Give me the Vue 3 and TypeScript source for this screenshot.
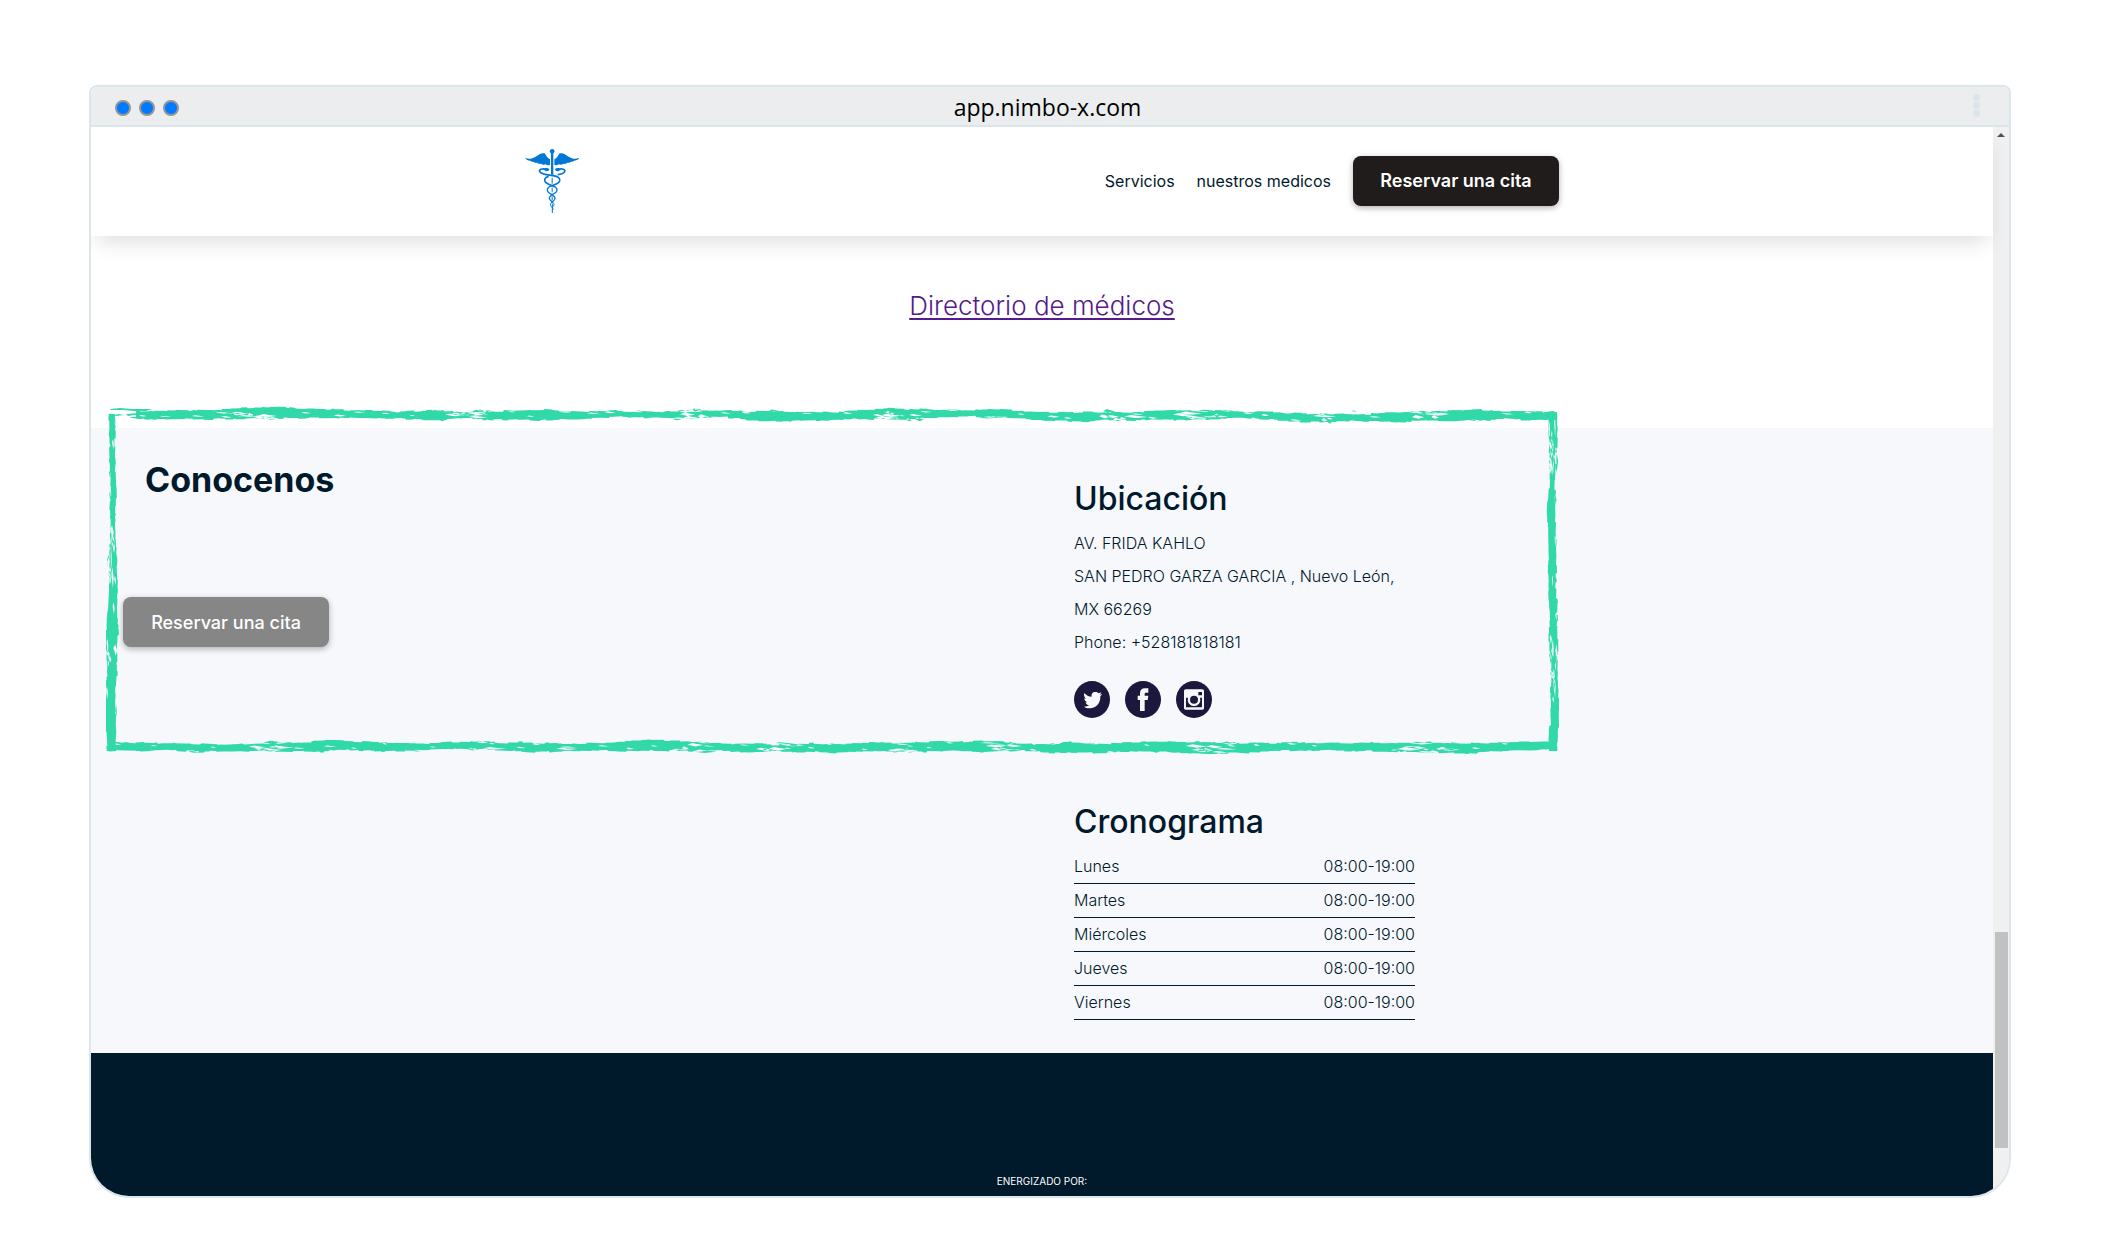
<script setup lang="ts">
interface DaySchedule {
  day: string
  hours: string
}

const schedule: DaySchedule[] = [
  { day: 'Lunes', hours: '08:00-19:00' },
  { day: 'Martes', hours: '08:00-19:00' },
  { day: 'Miércoles', hours: '08:00-19:00' },
  { day: 'Jueves', hours: '08:00-19:00' },
  { day: 'Viernes', hours: '08:00-19:00' },
]

// Small seeded generator, so that the brush frame is the same on every load.
function seeded(seed: number): () => number {
  let s = seed
  return () => {
    s = (s * 1664525 + 1013904223) % 4294967296
    return s / 4294967296
  }
}

type Profile = (t: number) => number

interface Stroke {
  from: number
  to: number
  center: Profile
  half: Profile
  seed: number
  vertical: boolean
}

// Dry-brush stroke along one axis: a ragged ribbon with long thin scratches cut out of it.
function brush({ from, to, center, half, seed, vertical }: Stroke): string {
  const rnd = seeded(seed)
  const point = (a: number, b: number) =>
    vertical ? `${b.toFixed(1)} ${a.toFixed(1)}` : `${a.toFixed(1)} ${b.toFixed(1)}`

  const edge = (sign: number): string[] => {
    const out: string[] = []
    let pos = from
    let wander = 0
    while (pos < to) {
      const t = pos / to
      wander = wander * 0.8 + (rnd() - 0.5) * 2
      const swell = Math.sin(pos / 47 + seed + sign) * 0.9
      const offset = center(t) + sign * (half(t) + swell) + wander
      const run = 2 + rnd() * 8
      out.push(point(pos, offset), point(Math.min(to, pos + run), offset + (rnd() - 0.5)))
      pos += run + rnd() * 2
    }
    return out
  }

  const ribbon = [...edge(-1), ...edge(1).reverse()]
  let d = `M${ribbon.join('L')}Z`

  let pos = from + 3
  while (pos < to - 24) {
    const t = pos / to
    const dense = Math.sin(pos / 37 + seed) + Math.sin(pos / 17) > 0.5
    const len = 5 + rnd() * (dense ? 20 : 8)
    const thick = 0.5 + rnd() * (dense ? 1.5 : 0.5)
    const y = center(t) + (rnd() - 0.5) * 2.2 * half(t)
    d += `M${[
      point(pos, y),
      point(pos + len * 0.3, y - thick),
      point(pos + len * 0.6, y - thick * 0.4),
      point(pos + len, y + 0.4),
      point(pos + len * 0.5, y + thick),
    ].join('L')}Z`
    pos += dense ? 2 + rnd() * 5 : 16 + rnd() * 26
  }
  return d
}

const strokes: string[] = [
  brush({
    from: 30,
    to: 1450,
    center: (t) => 8 + 2 * t + Math.sin(t * 40) * 0.6,
    half: (t) => 3.8 + Math.min(t, 0.3) * 2,
    seed: 11,
    vertical: false,
  }),
  brush({ from: 3, to: 1450, center: () => 341, half: () => 4.6, seed: 29, vertical: false }),
  brush({ from: 8, to: 345, center: (t) => 6.5 - t, half: (t) => 2.4 + t * 2.4, seed: 47, vertical: true }),
  brush({ from: 6, to: 345, center: (t) => 1447 + Math.sin(t * 9) * 0.6, half: () => 4, seed: 83, vertical: true }),
  // Loose bristle marks where the top stroke starts
  'M4 3L14 2L26 3L46 3L40 5L28 5L17 4L5 4ZM8 9L13 8L18 9L10 10ZM20 8L34 7L40 9L28 9L22 10ZM24 11L40 11L36 13L26 12Z',
]
</script>

<template>
  <div class="stage">
    <div class="window">
      <div class="titlebar">
        <div class="lights"><span></span><span></span><span></span></div>
        <div class="address">app.nimbo-x.com</div>
        <div class="kebab"><span></span><span></span><span></span></div>
      </div>

      <div class="viewport">
        <div class="page">
          <header class="site-header">
            <div class="header-inner">
              <svg class="logo" viewBox="48 42 162 192" role="img" aria-label="Caduceo">
                <g fill="#0078d4">
                  <circle cx="129.500" cy="49" r="7" />
                  <path d="M126 54H133V119H126Z" />
                  <path id="wing" d="M48 69C60 73 70 71 80 65C90 59 96 53 107 55C112 61 115 70 123 73V89C117 92 112 90 109 88C104 91 99 88 96 86C91 88 87 85 84 83C79 84 76 82 73 80C69 81 66 79 64 77C57 77 51 74 48 69Z" />
                  <use href="#wing" transform="translate(259 0) scale(-1 1)" />
                  <path id="head" d="M121 103C120 109 113 110 109 107L104 104C109 98 117 98 121 103Z" />
                  <use href="#head" transform="translate(259 0) scale(-1 1)" />
                </g>
                <g fill="none" stroke="#0078d4">
                  <path d="M113 103C99 99 89 104 92 110C96 118 114 120 132 122C148 124 154 130 152 138C149 148 132 150 124 154" stroke-width="5" />
                  <path d="M146 103C160 99 170 104 167 110C164 116 156 118 146 119M119 124C107 127 106 134 108 139C112 147 128 151 136 155" stroke-width="5" />
                  <path d="M126 153C111 159 113 169 121 174C130 180 138 183 138 190C138 196 132 199 127 203M133 153C148 159 146 169 138 174C129 180 121 183 121 190C121 196 128 199 132 203" stroke-width="4" />
                  <path d="M128 202C122 207 124 213 129 217C133 220 132 223 130 226M131 202C137 207 135 213 130 217M129.500 128V146M129.500 158V172M129.500 184V196M130 206V234" stroke-width="3" />
                </g>
              </svg>
              <nav class="nav">
                <a href="#servicios">Servicios</a>
                <a href="#medicos">nuestros medicos</a>
                <button type="button" class="cta">Reservar una cita</button>
              </nav>
            </div>
          </header>

          <section id="medicos" class="directory">
            <a href="#directorio">Directorio de médicos</a>
          </section>

          <section class="about">
            <svg class="brush-frame" viewBox="0 0 1453 348" preserveAspectRatio="none" aria-hidden="true">
              <path v-for="(d, i) in strokes" :key="i" :d="d" fill="#31d9a9" fill-rule="evenodd" />
            </svg>

            <div class="intro">
              <h1>Conocenos</h1>
              <button type="button" class="cta muted">Reservar una cita</button>
            </div>

            <div class="details">
              <h2>Ubicación</h2>
              <address>
                AV. FRIDA KAHLO<br />
                SAN PEDRO GARZA GARCIA , Nuevo León,<br />
                MX 66269<br />
                Phone: +528181818181
              </address>
              <div class="social">
                <a href="#twitter" aria-label="Twitter">
                  <svg viewBox="0 0 108 111">
                    <ellipse cx="54" cy="55.500" rx="54" ry="55.500" fill="#1b173d" />
                    <path d="M31 36C37 43 44 47 53 47C51 38 57 32 65 33C69 33 72 35 74 37L82 34L78 41L85 39L79 46C80 67 66 83 46 82C40 82 34 80 30 77C36 77 41 76 45 73C39 72 36 69 35 64H40C34 62 31 57 31 52L36 53C30 48 29 42 31 36Z" fill="#f7f8fc" />
                  </svg>
                </a>
                <a href="#facebook" aria-label="Facebook">
                  <svg viewBox="0 0 108 111">
                    <ellipse cx="54" cy="55.500" rx="54" ry="55.500" fill="#1b173d" />
                    <path d="M45 90V57H38V44H45V37C45 27 51 22 59 22H70V35H63C60 35 59 37 59 40V44H70L68 57H59V90Z" fill="#f7f8fc" />
                  </svg>
                </a>
                <a href="#instagram" aria-label="Instagram">
                  <svg viewBox="0 0 108 111">
                    <ellipse cx="54" cy="55.500" rx="54" ry="55.500" fill="#1b173d" />
                    <rect x="24" y="25" width="60" height="61" rx="5" fill="#f7f8fc" />
                    <path d="M30 50H36A19 19 0 1 0 72 50H78V79H30Z" fill="#1b173d" />
                    <circle cx="54" cy="56" r="18" fill="#f7f8fc" />
                    <circle cx="54" cy="56" r="12" fill="#1b173d" />
                    <rect x="67" y="33" width="11" height="10" rx="1" fill="#1b173d" />
                  </svg>
                </a>
              </div>

              <h2 id="cronograma" class="schedule-title">Cronograma</h2>
              <table class="schedule" aria-labelledby="cronograma">
                <tbody>
                  <tr v-for="row in schedule" :key="row.day">
                    <th scope="row">{{ row.day }}</th>
                    <td>{{ row.hours }}</td>
                  </tr>
                </tbody>
              </table>
            </div>
          </section>

          <footer class="site-footer">ENERGIZADO POR:</footer>
        </div>

        <div class="scrollbar" aria-hidden="true">
          <svg class="arrow" width="8" height="4" viewBox="0 0 8 4"><path d="M4 0L8 4H0Z" fill="#505050" /></svg>
          <div class="thumb"></div>
        </div>
      </div>
    </div>
  </div>
</template>

<style>
body {
  margin: 0;
  background: #ffffff;
}
</style>

<style scoped>
.stage {
  padding: 85px 90px 53px 89px;
  font-family: Inter, 'Open Sans', sans-serif;
  color: #00192b;
}

.window {
  border: 2px solid #dbe5ec;
  border-radius: 8px 8px 40px 40px;
  overflow: hidden;
}

.titlebar {
  display: grid;
  grid-template-columns: 1fr auto 1fr;
  align-items: center;
  height: 38px;
  padding: 0 29px 0 24px;
  background: #ecedef;
  border-bottom: 2px solid #dbe5ec;
}

.lights {
  display: flex;
  gap: 8px;
  padding-top: 4px;
}

.lights span {
  box-sizing: border-box;
  width: 16px;
  height: 16px;
  border: 2px solid #959595;
  border-radius: 50%;
  background: #007aff;
}

.address {
  padding-top: 2px;
  font-family: 'Open Sans', sans-serif;
  font-size: 23px;
  line-height: 32px;
  color: #000000;
}

.kebab {
  display: flex;
  flex-direction: column;
  align-items: flex-end;
  gap: 1px;
  padding-bottom: 2px;
}

.kebab span {
  width: 7px;
  height: 7px;
  border-radius: 50%;
  background: #dbe5ec;
}

.viewport {
  display: flex;
}

.page {
  flex: 1;
  min-width: 0;
}

.scrollbar {
  display: flex;
  flex-direction: column;
  align-items: center;
  width: 16px;
  background: #f0f0f0;
}

.arrow {
  margin-top: 6px;
}

.thumb {
  width: 13px;
  height: 216px;
  margin-top: auto;
  margin-bottom: 48px;
  background: #c1c1c1;
}

.site-header {
  position: relative;
  background: #ffffff;
  box-shadow: 0 12px 20px -6px rgba(0, 0, 0, 0.13);
}

.header-inner {
  box-sizing: border-box;
  display: flex;
  align-items: center;
  justify-content: space-between;
  max-width: 1034px;
  height: 109px;
  margin: 0 auto;
  padding-bottom: 2px;
}

.logo {
  width: 54px;
  height: 64px;
}

.nav {
  display: flex;
  align-items: center;
  gap: 22px;
  font-size: 16px;
}

.nav a {
  color: inherit;
  text-decoration: none;
}

.cta {
  width: 206px;
  height: 50px;
  padding: 0;
  border: 0;
  border-radius: 8px;
  background: #201c1b;
  color: #ffffff;
  font-family: inherit;
  font-size: 18px;
  font-weight: 600;
  box-shadow: 0 2px 6px rgba(0, 0, 0, 0.3);
}

.cta.muted {
  background: #868686;
  font-weight: 500;
}

.directory {
  display: flex;
  justify-content: center;
  padding: 54px 0 106px;
  font-size: 26px;
  font-weight: 300;
  line-height: 32px;
}

.directory a {
  color: #551a8b;
  text-underline-offset: 3px;
  text-decoration-thickness: 2px;
}

.about {
  position: relative;
  display: grid;
  grid-template-columns: 1fr 1fr;
  background: #f7f8fc;
}

.brush-frame {
  position: absolute;
  top: -22px;
  left: 15px;
  width: calc(50% + 502px);
  height: 348px;
  pointer-events: none;
}

.intro {
  padding: 30px 32px;
}

h1,
h2 {
  margin: 0;
}

h1 {
  margin-bottom: 95px;
  padding-left: 22px;
  font-size: 34px;
  font-weight: 700;
  line-height: 44px;
}

.details {
  padding: 51px 32px 33px;
}

h2 {
  font-size: 32px;
  font-weight: 500;
  line-height: 40px;
}

address {
  margin-top: 8px;
  font-size: 16px;
  font-style: normal;
  font-weight: 300;
  line-height: 33px;
}

.social {
  display: flex;
  gap: 15px;
  margin-top: 22px;
}

.social svg {
  display: block;
  width: 36px;
  height: 37px;
}

.schedule-title {
  margin-top: 84px;
}

.schedule {
  width: 341px;
  margin-top: 8px;
  border-collapse: collapse;
  font-size: 16px;
  line-height: 33px;
}

.schedule th,
.schedule td {
  padding: 0;
  border-bottom: 1px solid #00192b;
  font-weight: 300;
}

.schedule th {
  text-align: left;
}

.schedule td {
  text-align: right;
}

.site-footer {
  padding: 120px 0 7px;
  background: #00192b;
  color: #ffffff;
  font-size: 10px;
  line-height: 16px;
  text-align: center;
}
</style>
